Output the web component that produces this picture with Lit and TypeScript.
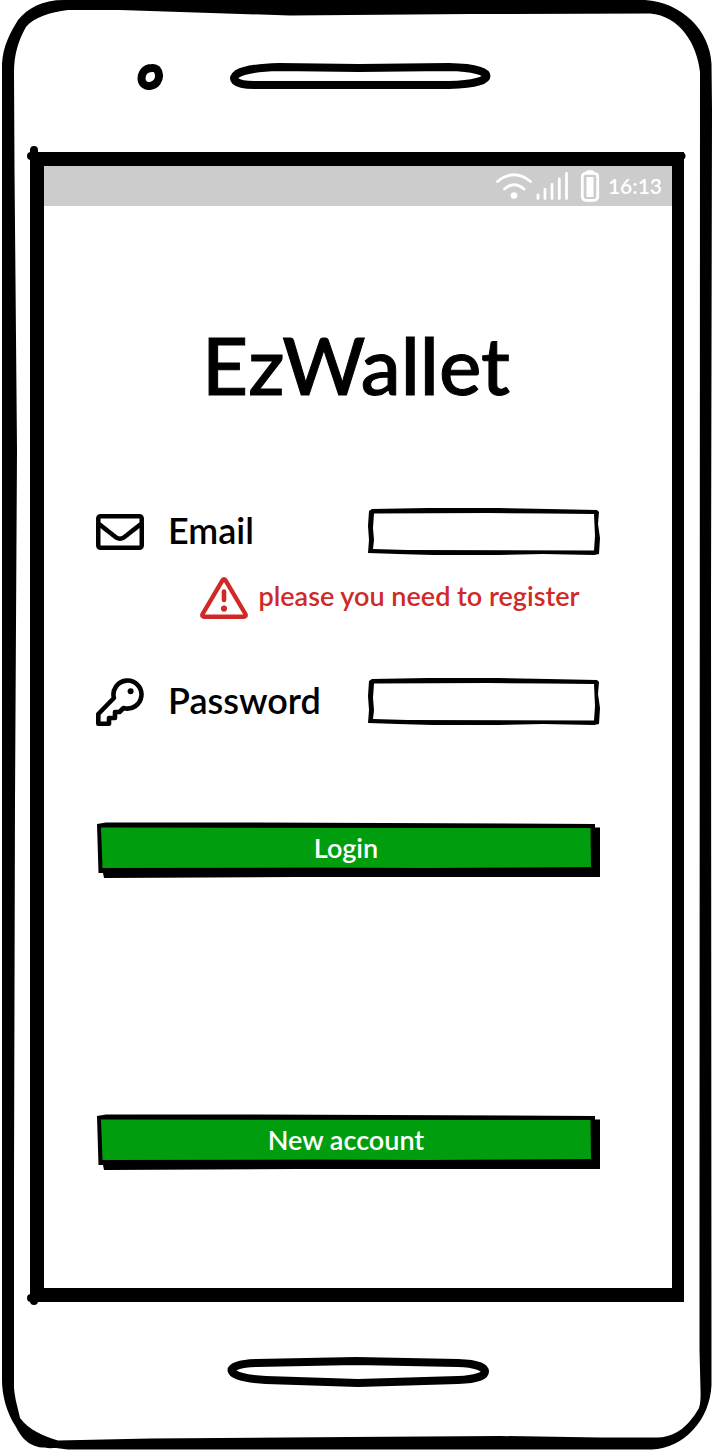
import { LitElement, html, svg, css } from "lit";
import { customElement, property, state } from "lit/decorators.js";

/* Hand-drawn box outline that stretches with the control it surrounds. */
const fieldOutline = html`
  <svg class="outline" viewBox="0 0 232 48" preserveAspectRatio="none" aria-hidden="true">
    <path
      fill-rule="evenodd"
      d="M1 3 L4 1 L60 0 L130 0 L180 1 L229 2 L231 4 L230 16 L232 30 L231 46 L226 47 L175 46 L130 47 L65 47 L30 46 L0 45 L1 32 L0 18 Z
         M6 5.500 L5 20 L6 32 L5 41 L40 42 L226 42.500 L227 28 L226 6 L180 5.500 L120 5 Z"
    />
  </svg>
`;

const buttonOutline = html`
  <svg class="outline" viewBox="0 0 504 56" preserveAspectRatio="none" aria-hidden="true">
    <path d="M1 2 L10 0.500 L160 0.500 L499 2 V5.500 H504 V55 L200 55 L8 56 L7 51 L2.500 51 Z" />
    <path fill="#009e0f" d="M5 5.500 L499 6 L494.500 6 L495 45 L330 46 L220 45.500 L6.500 46 Z" />
  </svg>
`;

const envelope = html`
  <svg class="icon" viewBox="0 0 512 512" aria-hidden="true">
    <path
      d="M464 64H48C21.490 64 0 85.490 0 112v288c0 26.510 21.490 48 48 48h416c26.510 0 48-21.490 48-48V112c0-26.510-21.490-48-48-48zm0 48v40.805c-22.422 18.259-58.168 46.651-134.587 106.490-16.841 13.247-50.201 45.072-73.413 44.701-23.208.375-56.579-31.459-73.413-44.701C106.180 199.465 70.425 171.067 48 152.805V112h416zM48 400V214.398c22.914 18.251 55.409 43.862 104.938 82.646 21.857 17.205 60.134 55.186 103.062 54.955 42.717.231 80.509-37.199 103.053-54.947 49.528-38.783 82.032-64.401 104.947-82.653V400H48z"
    />
  </svg>
`;

const key = html`
  <svg class="icon" viewBox="0 0 48 48" aria-hidden="true">
    <path
      fill="none"
      stroke="#000"
      stroke-width="4.600"
      stroke-linejoin="round"
      d="M17.900 20 L2.300 36 V45.700 H13 V40 H19 V34 H23.500 L27.500 30 A14 14 0 1 0 17.900 20 Z"
    />
    <circle cx="34.600" cy="13.300" r="3" />
  </svg>
`;

const warning = html`
  <svg class="warning" viewBox="0 0 48 42" aria-hidden="true">
    <path
      fill="none"
      stroke="currentColor"
      stroke-width="4.400"
      stroke-linejoin="round"
      d="M22.600 3.200 Q24 1.400 25.400 3.200 L45.400 37 Q46.400 39.500 44 39.700 H4 Q1.600 39.500 2.600 37 Z"
    />
    <path fill="none" stroke="currentColor" stroke-width="4.600" stroke-linecap="round" d="M24 14.500 V23" />
    <circle cx="24" cy="31.600" r="3.100" fill="currentColor" />
  </svg>
`;

const statusIcons = html`
  <svg class="status-icons" viewBox="0 0 104 32" aria-hidden="true">
    <g fill="none" stroke="#fff" stroke-width="2.800" stroke-linecap="round">
      <path d="M1.500 11.500 Q18 -2 34.500 11.500 M8.500 19 Q18 10.500 28 19" />
      <path d="M42 25 V28.500 M49 19.500 V28.500 M56 14.300 V28.500 M63.300 9 V28.500 M70.500 3.500 V28.500" />
      <rect x="86.300" y="3.300" width="15.400" height="27" rx="3.500" />
    </g>
    <g fill="#fff">
      <circle cx="18" cy="25.500" r="3.300" />
      <path d="M88 3 L91.500 0.300 H96.500 L100 3 Z" />
      <rect x="90.500" y="7" width="7" height="20" />
    </g>
  </svg>
`;

const bodyOutline = svg`
  <path fill-rule="evenodd" d="M64 0 H645 C681 2 710 30 711.500 64 L712 110 L711 600 L711.500 1385 C710 1420 684 1448 652 1449.500 L68 1449.500 L56 1448 C36 1449 25 1445 16 1427 C6 1412 2 1394 2 1380 V64 C3 46 10 33 18 20 C28 8 42 0 64 0 Z
    M68 10 C50 12.500 34 17 26 27 C18 41 14 55 14 72 L14.500 170 L17 450 L15 800 L14 1180 V1388 C15 1400 18 1408 20 1418 C29 1430 43 1436 58 1440.500 L150 1438.500 L350 1437 L500 1436 L600 1437.500 H658 C680 1437 692 1420 699 1408 Q701 1402 700.500 1390 L699.500 1350 V1250 L700 72 C697 44 680 16 650 13.500 L470 14 L290 15.500 L120 10 Z" />
`;

@customElement("app-root")
export class AppRoot extends LitElement {
  @property() time = "16:13";
  @state() private email = "";
  @state() private password = "";

  static styles = css`
    :host {
      display: block;
      font-family: Lato, "Open Sans", sans-serif;
      font-weight: 600;
      color: #000;
      background: #fff;
    }
    * {
      box-sizing: border-box;
    }
    .phone {
      position: relative;
      display: flex;
      flex-direction: column;
      min-height: 100vh;
      padding: 0 28px 0 30px;
    }
    .body-outline {
      position: absolute;
      inset: 0;
      width: 100%;
      height: 100%;
      pointer-events: none;
    }
    .top {
      display: grid;
      grid-template-columns: 1fr auto 1fr;
      align-items: center;
      height: 152px;
      padding-left: 8px;
    }
    .camera {
      justify-self: end;
      width: 28px;
      height: 28px;
      margin-right: 64px;
    }
    .speaker {
      width: 264px;
      height: 32px;
    }
    .bottom {
      display: flex;
      justify-content: center;
      align-items: center;
      height: 148px;
      padding: 0 0 8px 2px;
    }
    .screen {
      position: relative;
      flex: 1;
      display: flex;
      flex-direction: column;
      border: 14px solid #000;
      border-right-width: 12px;
    }
    .corner {
      position: absolute;
      width: 16px;
      height: 16px;
    }
    .corner.top-left {
      top: -20px;
      left: -18px;
    }
    .corner.bottom-left {
      bottom: -18px;
      left: -18px;
    }
    .corner.top-right {
      top: -16px;
      right: -14px;
    }
    .status {
      display: flex;
      justify-content: flex-end;
      align-items: center;
      gap: 8px;
      height: 40px;
      padding-right: 10px;
      background: #ccc;
      color: #fff;
      font-size: 21px;
      line-height: 24px;
    }
    .status-icons {
      width: 104px;
      height: 32px;
    }
    form {
      flex: 1;
      display: flex;
      flex-direction: column;
      padding: 110px 72px 118px 52px;
    }
    h1 {
      margin: 0 0 96px;
      padding-left: 16px;
      font-size: 80px;
      line-height: 96px;
      font-weight: 500;
      text-align: center;
      -webkit-text-stroke: 1px currentColor;
    }
    .row {
      display: grid;
      grid-template-columns: 48px 1fr 232px;
      align-items: center;
      column-gap: 24px;
      height: 48px;
    }
    .icon {
      width: 48px;
      height: 48px;
    }
    label {
      font-size: 36px;
      line-height: 44px;
      padding-bottom: 4px;
    }
    .field {
      display: grid;
    }
    .field > * {
      grid-area: 1 / 1;
    }
    .outline {
      width: 100%;
      height: 100%;
    }
    input {
      width: 100%;
      height: 48px;
      padding: 0 16px;
      border: 0;
      background: transparent;
      font: inherit;
      font-size: 24px;
      outline: none;
      z-index: 1;
    }
    .error {
      display: flex;
      justify-content: center;
      align-items: center;
      gap: 10px;
      margin: 20px 0 58px;
      padding-left: 84px;
      color: #cf2a27;
      font-size: 27px;
      line-height: 40px;
      white-space: nowrap;
    }
    .error span {
      padding-bottom: 4px;
    }
    .warning {
      flex: none;
      width: 48px;
      height: 44px;
    }
    button {
      display: grid;
      width: 100%;
      height: 56px;
      padding: 0;
      border: 0;
      background: transparent;
      color: #fff;
      font: inherit;
      font-size: 27px;
      line-height: 52px;
      cursor: pointer;
    }
    button > * {
      grid-area: 1 / 1;
    }
    button .outline {
      height: 56px;
    }
    .caption {
      z-index: 1;
      padding-right: 4px;
    }
    .login {
      margin-top: 96px;
    }
    .create {
      margin-top: auto;
    }
  `;

  render() {
    return html`
      <main class="phone">
        <svg class="body-outline" viewBox="0 0 712 1450" preserveAspectRatio="none" aria-hidden="true">
          ${bodyOutline}
        </svg>

        <div class="top" aria-hidden="true">
          <svg class="camera" viewBox="0 0 28 28">
            <path
              fill="none"
              stroke="#000"
              stroke-width="8"
              d="M15 6 C7 6 4.500 12 4.500 17 C5 22 9 24.500 13 24 C19 23.500 22.500 18 22 13 C21.500 8 19 5.500 15 6 Z"
            />
          </svg>
          <svg class="speaker" viewBox="0 0 264 32">
            <path
              fill="none"
              stroke="#000"
              stroke-width="8"
              d="M50 7 L130 8 L220 7 C270 8 270 24 220 25 H25 C4 25 2 18 8 14 C16 9 30 7.500 50 7 Z"
            />
          </svg>
          <span></span>
        </div>

        <section class="screen">
          <svg class="corner top-left" viewBox="0 0 16 16" aria-hidden="true">
            <path fill="none" stroke="#000" stroke-width="8" stroke-linecap="round" d="M8 4 V14 M5 10 H14" />
          </svg>
          <svg class="corner top-right" viewBox="0 0 16 16" aria-hidden="true">
            <path fill="none" stroke="#000" stroke-width="7" stroke-linecap="round" d="M4 6 H12" />
          </svg>
          <svg class="corner bottom-left" viewBox="0 0 16 16" aria-hidden="true">
            <path fill="none" stroke="#000" stroke-width="8" stroke-linecap="round" d="M8 2 V11 M5 8 H14" />
          </svg>

          <header class="status">${statusIcons}<time>${this.time}</time></header>

          <form @submit=${(e: Event) => e.preventDefault()}>
            <h1>EzWallet</h1>

            <div class="row">
              ${envelope}
              <label for="email">Email</label>
              <div class="field">
                ${fieldOutline}
                <input
                  id="email"
                  type="email"
                  .value=${this.email}
                  @input=${(e: Event) => (this.email = (e.target as HTMLInputElement).value)}
                />
              </div>
            </div>

            <div class="error" role="alert">${warning}<span>please you need to register</span></div>

            <div class="row">
              ${key}
              <label for="password">Password</label>
              <div class="field">
                ${fieldOutline}
                <input
                  id="password"
                  type="password"
                  .value=${this.password}
                  @input=${(e: Event) => (this.password = (e.target as HTMLInputElement).value)}
                />
              </div>
            </div>

            <button class="login" type="submit">${buttonOutline}<span class="caption">Login</span></button>
            <button class="create" type="button">${buttonOutline}<span class="caption">New account</span></button>
          </form>
        </section>

        <div class="bottom" aria-hidden="true">
          <svg class="speaker" viewBox="0 0 264 32">
            <path
              fill="none"
              stroke="#000"
              stroke-width="8"
              d="M30 7 L130 5 L232 7 C268 8 268 23 232 24 L132 27 L40 24 C-4 22 -4 8 30 7 Z"
            />
          </svg>
        </div>
      </main>
    `;
  }
}
